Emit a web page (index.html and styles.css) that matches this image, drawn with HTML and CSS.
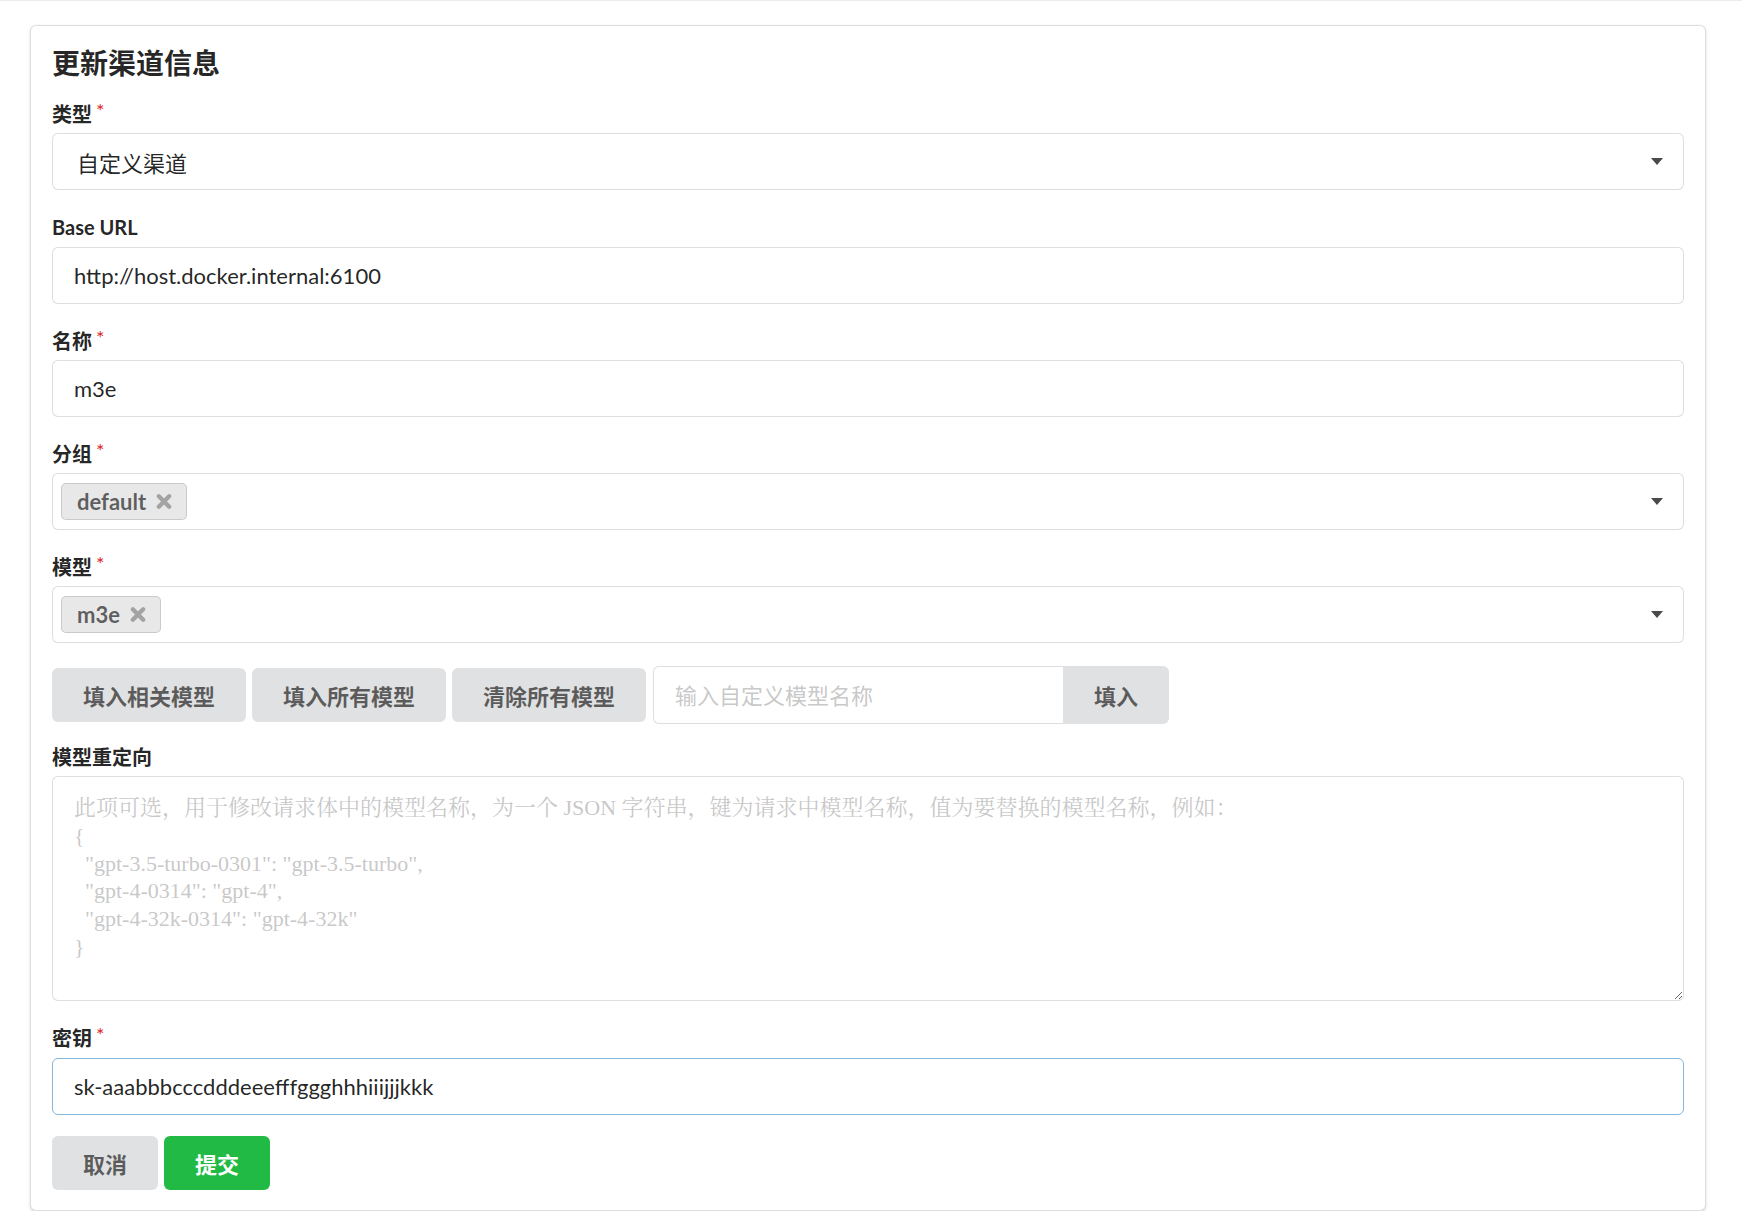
FILE: index.html
```html
<!DOCTYPE html>
<html lang="zh-CN">
<head>
<meta charset="utf-8">
<title>更新渠道信息</title>
<link rel="stylesheet" href="styles.css">
</head>
<body>
<div class="topline"></div>
<div class="page">
  <div class="card">
    <h3 class="title">更新渠道信息</h3>

    <div class="field">
      <label class="label req">类型</label>
      <div class="control dropdown">
        <span class="dd-text">自定义渠道</span>
        <i class="caret"></i>
      </div>
    </div>

    <div class="field">
      <label class="label">Base URL</label>
      <input class="control input" type="text" value="http://host.docker.internal:6100">
    </div>

    <div class="field">
      <label class="label req">名称</label>
      <input class="control input" type="text" value="m3e">
    </div>

    <div class="field">
      <label class="label req">分组</label>
      <div class="control dropdown multi">
        <span class="tag">default<svg class="tag-x" viewBox="0 0 16 16" width="16" height="15"><path d="M2.5 2.5 L13.5 13.5 M13.5 2.5 L2.5 13.5" stroke="currentColor" stroke-width="4.6" stroke-linecap="round"/></svg></span>
        <i class="caret"></i>
      </div>
    </div>

    <div class="field">
      <label class="label req">模型</label>
      <div class="control dropdown multi">
        <span class="tag">m3e<svg class="tag-x" viewBox="0 0 16 16" width="16" height="15"><path d="M2.5 2.5 L13.5 13.5 M13.5 2.5 L2.5 13.5" stroke="currentColor" stroke-width="4.6" stroke-linecap="round"/></svg></span>
        <i class="caret"></i>
      </div>
    </div>

    <div class="btn-row">
      <button class="btn">填入相关模型</button>
      <button class="btn">填入所有模型</button>
      <button class="btn">清除所有模型</button>
      <div class="action">
        <input class="action-input" type="text" placeholder="输入自定义模型名称">
        <button class="btn action-btn">填入</button>
      </div>
    </div>

    <div class="field">
      <label class="label">模型重定向</label>
      <textarea class="control textarea" placeholder="此项可选，用于修改请求体中的模型名称，为一个 JSON 字符串，键为请求中模型名称，值为要替换的模型名称，例如：&#10;{&#10;  &quot;gpt-3.5-turbo-0301&quot;: &quot;gpt-3.5-turbo&quot;,&#10;  &quot;gpt-4-0314&quot;: &quot;gpt-4&quot;,&#10;  &quot;gpt-4-32k-0314&quot;: &quot;gpt-4-32k&quot;&#10;}"></textarea>
    </div>

    <div class="field">
      <label class="label req">密钥</label>
      <input class="control input focused" type="text" value="sk-aaabbbcccdddeeefffggghhhiiijjjkkk">
    </div>

    <div class="actions">
      <button class="btn">取消</button>
      <button class="btn btn-green">提交</button>
    </div>
  </div>
</div>
</body>
</html>
```

FILE: styles.css
```css
html, body {
  margin: 0;
  padding: 0;
  background: #ffffff;
}

body {
  font-family: "Lato", "Noto Sans CJK SC", sans-serif;
  font-size: 22px;
  color: rgba(0, 0, 0, 0.87);
}

.topline {
  height: 1px;
  background: #ececec;
}

.page {
  padding: 24px 0 0 30px;
}

.card {
  box-sizing: border-box;
  width: 1676px;
  padding: 20px 21px 20px 21px;
  border: 1px solid rgba(34, 36, 38, 0.15);
  border-radius: 6px;
  box-shadow: 0 1.5px 3px 0 rgba(34, 36, 38, 0.15);
  background: #fff;
}

.title {
  margin: 0 0 17px 0;
  font-size: 28px;
  line-height: 35px;
  font-weight: 700;
  color: rgba(0, 0, 0, 0.87);
}

.field {
  margin-bottom: 21px;
}

.label {
  display: block;
  font-size: 20px;
  line-height: 29.3px;
  padding-top: 2px;
  font-weight: 700;
  margin-bottom: 4px;
  color: rgba(0, 0, 0, 0.87);
}

.req::after {
  content: "*";
  display: inline-block;
  vertical-align: top;
  margin: -4px 0 0 4px;
  color: #db2828;
  font-weight: 400;
}

.control {
  box-sizing: border-box;
  display: block;
  width: 100%;
  height: 57px;
  border: 1px solid rgba(34, 36, 38, 0.15);
  border-radius: 6px;
  background: #fff;
  font-family: "Lato", "Noto Sans CJK SC", sans-serif;
  font-size: 22px;
  color: rgba(0, 0, 0, 0.87);
}

.input {
  padding: 0 21px;
  outline: none;
}

.input.focused {
  border-color: #85b7d9;
}

.dropdown {
  display: flex;
  align-items: center;
  padding: 0 20px 0 24px;
}

.dd-text {
  flex: 1;
}

.dropdown.multi {
  padding-left: 8px;
}

.multi .caret {
  margin-left: auto;
}

.caret {
  width: 0;
  height: 0;
  border-left: 6px solid transparent;
  border-right: 6px solid transparent;
  border-top: 7px solid #4a4a4a;
}

.tag {
  display: inline-flex;
  align-items: center;
  box-sizing: border-box;
  height: 37px;
  padding: 0 15px 0 16px;
  background: #e8e8e8;
  border-radius: 5px;
  box-shadow: inset 0 0 0 1px rgba(34, 36, 38, 0.15);
  font-weight: 700;
  font-size: 22px;
  color: rgba(0, 0, 0, 0.6);
}

.tag-x {
  margin-left: 10px;
  color: #a3a3a3;
}

.btn-row {
  display: flex;
  align-items: center;
  gap: 6px;
  height: 58px;
  margin: 23px 0 16.5px 0;
}

.btn {
  box-sizing: border-box;
  height: 54px;
  padding: 0 31px;
  border: none;
  border-radius: 6px;
  background: #e0e1e2;
  color: rgba(0, 0, 0, 0.6);
  font-family: "Lato", "Noto Sans CJK SC", sans-serif;
  font-size: 22px;
  font-weight: 700;
  cursor: pointer;
}

.action {
  display: flex;
  height: 58px;
  margin-left: 1px;
}

.action-input {
  box-sizing: border-box;
  width: 410px;
  height: 58px;
  padding: 0 21px;
  border: 1px solid rgba(34, 36, 38, 0.15);
  border-right: none;
  border-radius: 6px 0 0 6px;
  font-family: "Lato", "Noto Sans CJK SC", sans-serif;
  font-size: 22px;
  outline: none;
}

.action-input::placeholder,
.textarea::placeholder {
  color: rgba(191, 191, 191, 0.87);
}

.action-btn {
  height: 58px;
  border-radius: 0 6px 6px 0;
}

.textarea {
  height: 225px;
  padding: 17px 21px;
  resize: vertical;
  font-family: "Liberation Serif", "Noto Serif CJK SC", "Noto Sans CJK SC", serif;
  font-size: 22px;
  line-height: 27.7px;
  outline: none;
}

.actions {
  display: flex;
  gap: 6px;
}

.btn-green {
  background: #21ba45;
  color: #ffffff;
}
```
